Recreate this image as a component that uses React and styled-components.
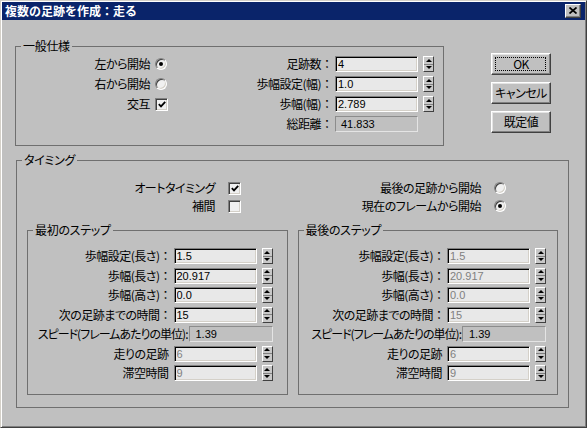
import React from 'react';
import styled, { createGlobalStyle } from 'styled-components';

const Global = createGlobalStyle`
  html, body { margin: 0; padding: 0; background: #c0c0c0; }
  body {
    font-family: "Noto Sans CJK JP", "Liberation Sans", sans-serif;
    font-size: 12px;
    color: #000;
  }
`;

const Window = styled.div`
  box-sizing: border-box;
  width: 587px;
  height: 428px;
  background: #c0c0c0;
  border: 1px solid;
  border-color: #d4d0c8 #404040 #404040 #d4d0c8;
  box-shadow: inset 1px 1px #fff, inset -1px -1px #808080;
  padding: 1px;
  display: flex;
  flex-direction: column;
`;

const TitleBar = styled.div`
  flex: none;
  height: 18px;
  background: #0a246a;
  color: #fff;
  display: flex;
  align-items: center;
  justify-content: space-between;
  padding: 0 4px 0 3px;
`;

const Title = styled.span`
  font-weight: 700;
  font-size: 12px;
  line-height: 18px;
  white-space: nowrap;
`;

const CloseButton = styled.div`
  box-sizing: border-box;
  width: 16px;
  height: 14px;
  background: #c0c0c0;
  border: 1px solid;
  border-color: #fff #404040 #404040 #fff;
  box-shadow: inset -1px -1px #808080;
  display: flex;
  align-items: center;
  justify-content: center;
  padding-bottom: 1px;
`;

const Body = styled.div`
  flex: 1;
  display: flex;
  flex-direction: column;
  padding: 20px 0 0 13px;
`;

const TopRow = styled.div`
  display: flex;
  align-items: flex-start;
`;

const Group = styled.fieldset`
  margin: 0;
  padding: 0;
  min-width: 0;
  border: 1px solid #6f6f6f;
  width: ${p => (p.$width ? `${p.$width}px` : 'auto')};
  flex: ${p => (p.$grow ? 1 : 'none')};
  box-sizing: border-box;
  margin-left: ${p => p.$ml || 0}px;
  margin-top: ${p => p.$mt || 0}px;
`;

const Legend = styled.legend`
  margin-left: 5px;
  padding: 0 2px;
  font-size: 12px;
  line-height: 12px;
  height: 12px;
  font-feature-settings: "palt";
  letter-spacing: -0.3px;
  white-space: nowrap;
`;

const GeneralGrid = styled.div`
  display: grid;
  grid-template-columns: 134px 13px 1fr 83px 11px;
  grid-auto-rows: 16px;
  row-gap: 4px;
  column-gap: 5px;
  align-items: center;
  padding: 4px 9px 13px 0;
`;

const Label = styled.span`
  grid-column: ${p => p.$col || 'auto'};
  text-align: right;
  white-space: nowrap;
  line-height: 16px;
  font-size: 12px;
  font-feature-settings: "palt";
  letter-spacing: ${p => (p.$tight ? '-1px' : '-0.5px')};
`;

const Colon = styled.span`
  display: inline-block;
  width: 12px;
  margin-right: -3px;
  text-align: center;
  font-feature-settings: normal;
  letter-spacing: 0;
`;

const Field = styled.input`
  box-sizing: border-box;
  width: 100%;
  height: 16px;
  margin: 0;
  padding: 0 1px 0 2px;
  font: 11px "Liberation Sans", Arial, sans-serif;
  color: ${p => (p.$dim ? '#808080' : '#000')};
  background: #e8e8e8;
  border: 1px solid;
  border-color: #808080 #fff #fff #808080;
  box-shadow: inset 1px 1px #000, inset -1px -1px #d4d0c8;
  outline: none;
`;

const ReadOut = styled.div`
  box-sizing: border-box;
  flex: none;
  grid-column: ${p => p.$col || 'auto'};
  width: ${p => (p.$width ? `${p.$width}px` : '100%')};
  height: 16px;
  border: 1px solid;
  border-color: #8c8c8c #e4e4e4 #e4e4e4 #8c8c8c;
  font: 11px "Liberation Sans", Arial, sans-serif;
  line-height: 14px;
  padding-left: ${p => p.$pad || 5}px;
`;

const Spin = styled.div`
  box-sizing: border-box;
  width: 11px;
  height: 16px;
  display: flex;
  flex-direction: column;
  border: 1px solid;
  border-color: #fff #404040 #404040 #fff;
  background: #c8c8c8;
`;

const SpinHalf = styled.div`
  flex: 1;
  display: flex;
  align-items: center;
  justify-content: center;
  & + & {
    border-top: 1px solid #808080;
  }
`;

const Arrow = styled.span`
  width: 0;
  height: 0;
  border-left: 3px solid transparent;
  border-right: 3px solid transparent;
  ${p => (p.$down ? 'border-top: 3px solid #000;' : 'border-bottom: 3px solid #000;')}
`;

const Radio = styled.span`
  box-sizing: border-box;
  width: 12px;
  height: 12px;
  border-radius: 50%;
  background: #f0f0f0;
  border: 1px solid;
  border-color: #808080 #fff #fff #808080;
  box-shadow: inset 1px 1px #404040, inset -1px -1px #d4d0c8;
  display: flex;
  align-items: center;
  justify-content: center;
  &::after {
    content: '';
    width: 4px;
    height: 4px;
    border-radius: 50%;
    background: #000;
    display: ${p => (p.$on ? 'block' : 'none')};
  }
`;

const CheckBox = styled.span`
  box-sizing: border-box;
  width: 13px;
  height: 13px;
  background: #f0f0f0;
  border: 1px solid;
  border-color: #808080 #fff #fff #808080;
  box-shadow: inset 1px 1px #404040, inset -1px -1px #d4d0c8;
  display: flex;
  align-items: center;
  justify-content: center;
`;

const ButtonColumn = styled.div`
  display: flex;
  flex-direction: column;
  gap: 7px;
  margin: 13px 0 0 47px;
`;

const Button = styled.div`
  box-sizing: border-box;
  width: 60px;
  height: 22px;
  background: #c0c0c0;
  border: 1px solid;
  border-color: #fff #404040 #404040 #fff;
  box-shadow: inset -1px -1px #808080, inset 1px 1px #e4e4e4;
  display: flex;
  align-items: center;
  justify-content: center;
  font-size: 12px;
  line-height: 14px;
  font-feature-settings: "palt";
  letter-spacing: -0.5px;
  position: relative;
  ${p =>
    p.$focus &&
    `&::after {
      content: '';
      position: absolute;
      inset: 3px 4px 3px 3px;
      border: 1px dotted #000;
    }`}
`;

const TimingOptions = styled.div`
  display: grid;
  grid-template-columns: 198px 13px 1fr 13px;
  column-gap: 13px;
  grid-auto-rows: 14px;
  row-gap: 4px;
  align-items: center;
  padding: 15px 61px 0 0;
`;

const StepRow = styled.div`
  display: flex;
  gap: 10px;
  padding: 11px 10px 12px 10px;
`;

const StepGrid = styled.div`
  display: grid;
  grid-template-columns: 1fr 83px 11px;
  column-gap: 5px;
  grid-auto-rows: 16px;
  row-gap: 3.5px;
  align-items: center;
  padding: 12px ${p => p.$padRight}px 13px 0;
`;

const SpeedRow = styled.div`
  grid-column: 1 / -1;
  display: flex;
  justify-content: flex-end;
  align-items: center;
  gap: 1px;
`;

const Spinner = () => (
  <Spin>
    <SpinHalf><Arrow /></SpinHalf>
    <SpinHalf><Arrow $down /></SpinHalf>
  </Spin>
);

const Tick = () => (
  <svg width="8" height="7" viewBox="0 0 8 7">
    <path d="M0.8 3.2 L3 5.4 L7.2 0.9" fill="none" stroke="#000" strokeWidth="1.8" />
  </svg>
);

const steps = [
  { label: '歩幅設定(長さ)', colon: true, value: '1.5' },
  { label: '歩幅(長さ)', colon: true, value: '20.917' },
  { label: '歩幅(高さ)', colon: true, value: '0.0' },
  { label: '次の足跡までの時間', colon: true, value: '15' },
  { speed: true, label: 'スピード(フレームあたりの単位):', value: '1.39' },
  { label: '走りの足跡', value: '6', dim: true },
  { label: '滞空時間', value: '9', dim: true },
];

const StepGroup = ({ title, padRight, allDim }) => (
  <Group $grow>
    <Legend>{title}</Legend>
    <StepGrid $padRight={padRight}>
      {steps.map(s =>
        s.speed ? (
          <SpeedRow key={s.label}>
            <Label $tight>{s.label}</Label>
            <ReadOut $width={84} $pad={6}>{s.value}</ReadOut>
          </SpeedRow>
        ) : (
          <React.Fragment key={s.label}>
            <Label>
              {s.label}
              {s.colon && <Colon>：</Colon>}
            </Label>
            <Field readOnly value={s.value} $dim={allDim || s.dim} />
            <Spinner />
          </React.Fragment>
        )
      )}
    </StepGrid>
  </Group>
);

export default function App() {
  return (
    <>
      <Global />
      <Window>
        <TitleBar>
          <Title>複数の足跡を作成：走る</Title>
          <CloseButton>
            <svg width="8" height="7" viewBox="0 0 8 7">
              <path d="M0.5 0.5 L7.5 6.5 M7.5 0.5 L0.5 6.5" stroke="#000" strokeWidth="1.7" />
            </svg>
          </CloseButton>
        </TitleBar>
        <Body>
          <TopRow>
            <Group $width={429}>
              <Legend>一般仕様</Legend>
              <GeneralGrid>
                <Label>左から開始</Label>
                <Radio $on />
                <Label>足跡数<Colon>：</Colon></Label>
                <Field readOnly value="4" />
                <Spinner />

                <Label>右から開始</Label>
                <Radio />
                <Label>歩幅設定(幅)<Colon>：</Colon></Label>
                <Field readOnly value="1.0" />
                <Spinner />

                <Label>交互</Label>
                <CheckBox><Tick /></CheckBox>
                <Label>歩幅(幅)<Colon>：</Colon></Label>
                <Field readOnly value="2.789" />
                <Spinner />

                <Label $col={3}>総距離<Colon>：</Colon></Label>
                <ReadOut>41.833</ReadOut>
              </GeneralGrid>
            </Group>
            <ButtonColumn>
              <Button $focus>OK</Button>
              <Button>キャンセル</Button>
              <Button>既定値</Button>
            </ButtonColumn>
          </TopRow>

          <Group $width={553} $ml={1} $mt={8}>
            <Legend>タイミング</Legend>
            <TimingOptions>
              <Label>オートタイミング</Label>
              <CheckBox><Tick /></CheckBox>
              <Label>最後の足跡から開始</Label>
              <Radio />

              <Label>補間</Label>
              <CheckBox />
              <Label>現在のフレームから開始</Label>
              <Radio $on />
            </TimingOptions>
            <StepRow>
              <StepGroup title="最初のステップ" padRight={14} />
              <StepGroup title="最後のステップ" padRight={11} allDim />
            </StepRow>
          </Group>
        </Body>
      </Window>
    </>
  );
}
